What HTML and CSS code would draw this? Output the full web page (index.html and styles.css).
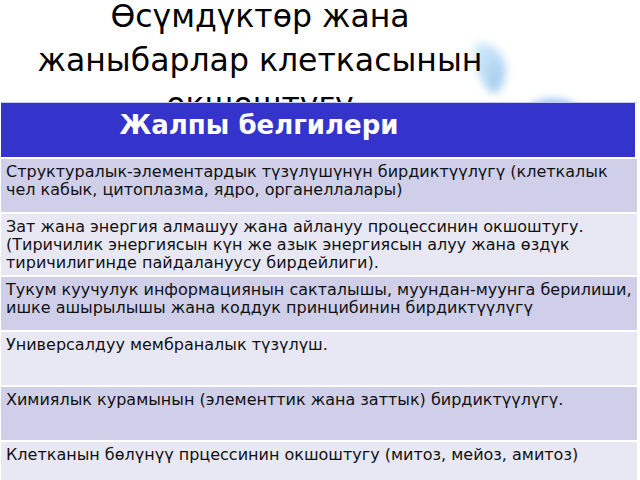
FILE: index.html
```html
<!DOCTYPE html>
<html lang="ky">
<head>
<meta charset="utf-8">
<title>Өсүмдүктөр жана жаныбарлар клеткасынын окшоштугу</title>
<link rel="stylesheet" href="styles.css">
</head>
<body>
<div class="slide">
  <svg class="deco" width="640" height="120" viewBox="0 0 640 120" aria-hidden="true">
    <defs>
      <filter id="blur" x="-50%" y="-50%" width="200%" height="200%">
        <feGaussianBlur stdDeviation="4"/>
      </filter>
      <linearGradient id="drop" x1="0" y1="0" x2="1" y2="1">
        <stop offset="0" stop-color="#d3eafb"/>
        <stop offset="1" stop-color="#7fb8ea"/>
      </linearGradient>
    </defs>
    <path d="M476 44 C488 40 502 50 505 66 C507 80 500 92 494 94 C486 90 480 78 475 66 C472 56 472 48 476 44 Z" fill="url(#drop)" filter="url(#blur)" opacity="0.8"/>
    <ellipse cx="553" cy="110" rx="24" ry="10" fill="#6ba8e4" filter="url(#blur)" opacity="0.85"/>
  </svg>
  <div class="title">
    <h1>Өсүмдүктөр жана жаныбарлар клеткасынын окшоштугу</h1>
  </div>
  <div class="table">
    <div class="head">Жалпы белгилери</div>
    <div class="row odd">Структуралык-элементардык түзүлүшүнүн бирдиктүүлүгү (клеткалык чел кабык, цитоплазма, ядро, органеллалары)</div>
    <div class="row even">Зат жана энергия алмашуу жана айлануу процессинин окшоштугу. (Тиричилик энергиясын күн же азык энергиясын алуу жана өздүк тиричилигинде пайдалануусу бирдейлиги).</div>
    <div class="row odd">Тукум куучулук информациянын сакталышы, муундан-муунга берилиши, ишке ашырылышы жана коддук принцибинин бирдиктүүлүгү</div>
    <div class="row even">Универсалдуу мембраналык түзүлүш.</div>
    <div class="row odd">Химиялык курамынын (элементтик жана заттык) бирдиктүүлүгү.</div>
    <div class="row even last">Клетканын бөлүнүү прцессинин окшоштугу (митоз, мейоз, амитоз)</div>
  </div>
</div>
</body>
</html>
```
FILE: styles.css
```css
html, body {
  margin: 0;
  padding: 0;
  background: #ffffff;
}

.slide {
  position: relative;
  width: 640px;
  height: 480px;
  overflow: hidden;
  background: #ffffff;
  font-family: "DejaVu Sans", "Liberation Sans", sans-serif;
}

.deco {
  position: absolute;
  left: 0;
  top: 0;
  z-index: 0;
}

.title {
  position: relative;
  z-index: 1;
  width: 520px;
  height: 102px;
  overflow: hidden;
}

.title h1 {
  margin: -6px 0 0 0;
  font-size: 31.5px;
  line-height: 44px;
  font-weight: normal;
  color: #000000;
  text-align: center;
}

.table {
  position: relative;
  z-index: 2;
  width: 636px;
  margin-left: 1px;
  border-top: 1px solid #c9c9ee;
  background: #ffffff;
  display: flex;
  flex-direction: column;
  gap: 2px;
}

.head {
  background: #3434cc;
  color: #ffffff;
  font-weight: bold;
  font-size: 26px;
  line-height: 30px;
  height: 54px;
  box-sizing: border-box;
  padding: 7px 118px 0 0;
  text-align: center;
  margin-right: 2px;
}

.row {
  box-sizing: border-box;
  min-height: 53px;
  padding: 4px 0 3px 5px;
  font-size: 16px;
  line-height: 18px;
  color: #111111;
}

.odd {
  background: #cfcfea;
}

.even {
  background: #e8e8f4;
}

.last {
  min-height: 60px;
}
```
